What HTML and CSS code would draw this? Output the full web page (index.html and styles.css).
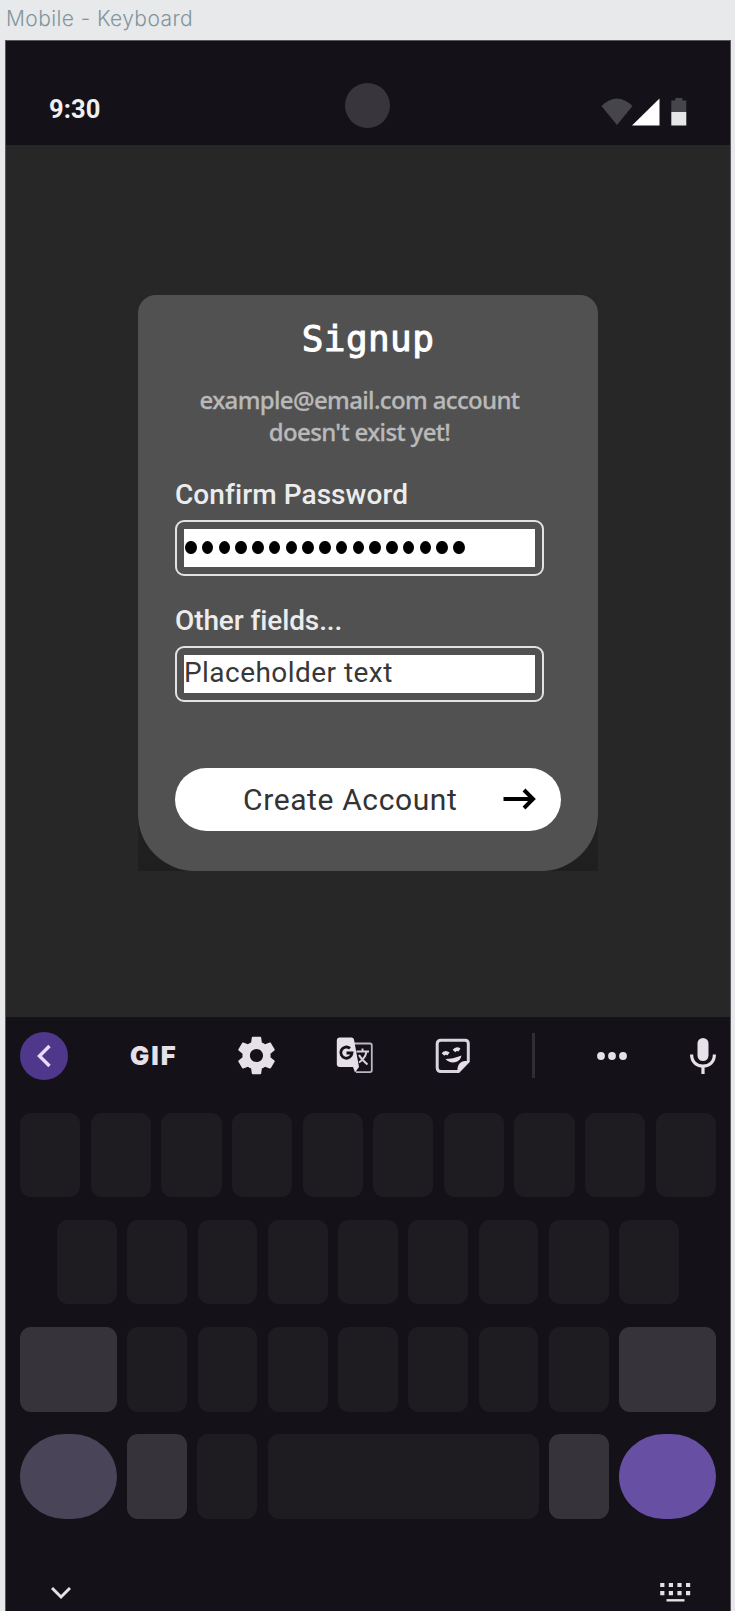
FILE: index.html
```html
<!DOCTYPE html>
<html lang="en">
<head>
<meta charset="utf-8">
<title>Mobile - Keyboard</title>
<link rel="stylesheet" href="styles.css">
</head>
<body>
<div class="frame-label"><span>Mobile - Keyboard</span></div>
<div class="phone">
  <header class="status">
    <span class="time">9:30</span>
    <span class="camera"></span>
    <svg class="status-icons" viewBox="0 0 90 32" width="90" height="32">
      <path fill="#46464a" d="M1.500 9Q17 -6 32.500 9L17 28z"/>
      <path fill="#fff" d="M59.500 1.500V28.500H32z"/>
      <path fill="#46464a" d="M71.300 3.500h4V1h7v2.500h4V15h-15z"/>
      <path fill="#e6e6e6" d="M71.300 15h15v13.500h-15z"/>
    </svg>
  </header>
  <main class="screen">
    <div class="card-shadow">
      <section class="card">
        <h1 class="title"><span>Signup</span></h1>
        <p class="subtitle"><span>example@email.com account</span><br><span>doesn't exist yet!</span></p>
        <div class="label"><span>Confirm Password</span></div>
        <div class="field"><div class="value dots"><i></i><i></i><i></i><i></i><i></i><i></i><i></i><i></i><i></i><i></i><i></i><i></i><i></i><i></i><i></i><i></i><i></i></div></div>
        <div class="label second"><span>Other fields...</span></div>
        <div class="field"><div class="value"><span>Placeholder text</span></div></div>
        <div class="create">
          <span>Create Account</span>
          <svg viewBox="0 0 34 24" width="34" height="24" fill="none" stroke="#000" stroke-width="4"><path d="M.5 12H30M21 3l9 9-9 9"/></svg>
        </div>
      </section>
    </div>
  </main>
  <section class="keyboard">
    <div class="toolbar">
      <div class="back"><svg viewBox="0 0 48 48" width="48" height="48" fill="none" stroke="#e9dcfb" stroke-width="3.400"><path d="M29.500 14L19.500 24l10 10"/></svg></div>
      <div class="gif"><span>GIF</span></div>
      <svg class="gear" viewBox="0 0 24 24" width="45" height="45" fill="#e6e0e9"><path d="M19.430 12.980c.04-.32.07-.64.07-.98s-.03-.66-.07-.98l2.110-1.650c.19-.15.24-.42.12-.64l-2-3.460c-.12-.22-.39-.3-.61-.22l-2.490 1c-.52-.4-1.080-.73-1.690-.98l-.38-2.650C14.460 2.180 14.250 2 14 2h-4c-.25 0-.46.18-.49.42l-.38 2.650c-.61.25-1.170.59-1.690.98l-2.490-1c-.23-.09-.49 0-.61.22l-2 3.460c-.13.22-.07.49.12.64l2.110 1.650c-.04.32-.07.65-.07.98s.03.66.07.98l-2.110 1.650c-.19.15-.24.42-.12.64l2 3.460c.12.22.39.3.61.22l2.490-1c.52.4 1.080.73 1.690.98l.38 2.650c.03.24.24.42.49.42h4c.25 0 .46-.18.49-.42l.38-2.650c.61-.25 1.170-.59 1.690-.98l2.490 1c.23.09.49 0 .61-.22l2-3.460c.12-.22.07-.49-.12-.64l-2.110-1.650zM12 15.500c-1.930 0-3.500-1.570-3.500-3.500s1.570-3.500 3.500-3.500 3.500 1.570 3.500 3.500-1.570 3.500-3.500 3.500z"/></svg>
      <svg class="translate" viewBox="0 0 39 39" width="39" height="39">
        <path d="M19 7.500h16q1.800 0 1.800 1.800v25q0 1.800-1.800 1.800H21" fill="none" stroke="#bcb7c0" stroke-width="1.800"/>
        <path fill="#e6e0e9" d="M5 1.500H16.500Q18.500 1.500 19 3.500L24 31l-4 5.500L18 31H5Q1.800 31 1.800 28V4.700Q1.800 1.500 5 1.500z"/>
        <path d="M15 12.300A5.600 5.600 0 1 0 17 17H11.500" fill="none" stroke="#141118" stroke-width="2.800"/>
        <path d="M21.500 15.500H34M27.500 12.500v3M31.500 16q-1.500 6.500-7.500 10.500M24 19q2.500 4.500 8.500 9.500" fill="none" stroke="#d5d0d9" stroke-width="2"/>
      </svg>
      <svg class="sticker" viewBox="0 0 36 36" width="36" height="36"><path d="M6 2.200H30Q33.300 2.200 33.300 5.500V23.500L23.500 33.500H6Q2.200 33.500 2.200 30V5.500Q2.200 2.200 6 2.200z" fill="none" stroke="#d9d4dd" stroke-width="3"/><path fill="#e6e0e9" d="M34.500 23H29.500q-6 1-7 7v5zM10.500 21q7 0 16-3.500-1 5-5.500 6.500-6.500 1.500-10.500-3z"/><path d="M8 16.500q2.500-3 5.500-.5M19 13q2.500-3 5.500-1" fill="none" stroke="#e6e0e9" stroke-width="3.600"/></svg>
      <div class="divider"></div>
      <svg class="more" viewBox="0 0 32 10" width="32" height="10" fill="#e6e0e9"><circle cx="5" cy="5" r="3.900"/><circle cx="16" cy="5" r="3.900"/><circle cx="27" cy="5" r="3.900"/></svg>
      <svg class="mic" viewBox="0 0 28 38" width="28" height="38"><rect x="8.500" y="1" width="11" height="23" rx="5.500" fill="#e6e0e9"/><path d="M2.600 17.500c0 7.500 5 11.500 11.400 11.500s11.400-4 11.400-11.500M14 29v8" fill="none" stroke="#e6e0e9" stroke-width="3.200"/></svg>
    </div>
    <div class="keys">
      <div class="row"><b></b><b></b><b></b><b></b><b></b><b></b><b></b><b></b><b></b><b></b></div>
      <div class="row inset"><b></b><b></b><b></b><b></b><b></b><b></b><b></b><b></b><b></b></div>
      <div class="row"><b class="wide light"></b><b></b><b></b><b></b><b></b><b></b><b></b><b></b><b class="wide light"></b></div>
      <div class="row"><b class="wide round muted"></b><b class="light"></b><b></b><b class="space"></b><b class="light"></b><b class="wide round primary"></b></div>
    </div>
    <footer class="nav">
      <svg class="collapse" viewBox="0 0 20 14" width="20" height="14" fill="none" stroke="#e6e0e9" stroke-width="3"><path d="M1 2l9 9 9-9"/></svg>
      <svg viewBox="0 0 31 20" width="31" height="20" fill="none" stroke="#e6e0e9" stroke-width="4.200"><path stroke-dasharray="4.200 4.400" d="M.2 3H31M.2 11.200H31"/><path stroke-width="2.400" d="M6.500 18.300h18"/></svg>
    </footer>
  </section>
</div>
</body>
</html>
```
FILE: styles.css
```css
* { box-sizing: border-box; }
body { margin: 0; width: 735px; height: 1611px; overflow: hidden; background: #e7e9eb; font-family: Roboto, sans-serif; display: flex; flex-direction: column; }
span { white-space: nowrap; }
.frame-label { height: 40px; padding-left: 6px; font: 300 21px/38px Inter, sans-serif; color: #82959c; letter-spacing: 0.400px; }
.phone { width: 726px; height: 1571px; margin-left: 5px; border: 1px solid #5b565f; border-bottom: 0; background: #141118; display: flex; flex-direction: column; }
.status { height: 104px; flex: none; display: grid; grid-template-columns: 1fr 45px 1fr; align-items: start; background: #141118; }
.time { margin: 53px 0 0 43px; font-size: 25.500px; line-height: 30px; font-weight: 700; color: #f0f0f0; letter-spacing: 0.100px; }
.camera { width: 45px; height: 45px; margin: 41.500px 0 0 -0.500px; border-radius: 50%; background: #39353c; }
.status-icons { justify-self: end; margin: 56px 40px 0 0; }
.screen { height: 872px; flex: none; background: #272727; padding: 150px 0 0 132px; }
.card-shadow { width: 460px; height: 576px; background: linear-gradient(#262626 60%, #1f1f1f); }
.card { width: 460px; height: 576px; border-radius: 18px 18px 57px 57px; background: #515151; padding: 20px 37px 0; }
.title { margin: 0; height: 48px; font: 400 36px/48px "DejaVu Sans Mono", monospace; color: #fff; text-align: center; letter-spacing: 0.400px; -webkit-text-stroke: 1px #fff; }
.subtitle { margin: 21px 0 0; height: 64px; padding-right: 17px; text-align: center; font: 500 24px/32px "Noto Sans", sans-serif; color: #b9b9b9; letter-spacing: -0.640px; -webkit-text-stroke: 0.300px #b9b9b9; }
.label { margin-top: 27px; height: 40px; font-size: 28px; line-height: 40px; font-weight: 500; color: #ececec; letter-spacing: 0.080px; }
.label.second { margin-top: 25px; height: 45px; letter-spacing: -0.100px; }
.field { width: 369px; height: 56px; margin-top: 5px; border: 2px solid #e2e2e2; border-radius: 9px; padding: 7px; }
.second + .field { margin-top: 0; }
.value { height: 38px; background: #fff; line-height: 35px; font-size: 28px; color: #383838; letter-spacing: 0.450px; }
.dots { display: flex; align-items: center; gap: 5.250px; padding: 0 0 1px 1px; }
.dots i { width: 11.500px; height: 13.500px; border-radius: 50%; background: #000; }
.create { margin-top: 66px; width: 386px; height: 63px; border-radius: 32px; background: #fff; display: flex; align-items: center; padding: 0 24px 1px 68px; justify-content: space-between; font-size: 30px; color: #333; letter-spacing: 0.620px; }
.keyboard { flex: 1; display: flex; flex-direction: column; }
.toolbar { height: 77px; display: flex; align-items: center; padding-left: 14px; }
.toolbar > * { flex: none; }
.back { width: 48px; height: 48px; border-radius: 50%; background: #4f378b; }
.gif { width: 46px; margin-left: 62px; color: #e6e0e9; font: 900 25.500px/38px Inter, sans-serif; letter-spacing: 2px; }
.gear { margin-left: 57.500px; }
.translate { margin-left: 56px; }
.sticker { margin-left: 61px; }
.divider { width: 3px; height: 45px; margin-left: 61.500px; background: #302e34; }
.more { margin-left: 61px; }
.mic { margin-left: 61px; }
.keys { height: 406.400px; margin-top: 18.500px; padding: 0 14px; display: flex; flex-direction: column; justify-content: space-between; }
.row { height: 84.800px; display: flex; gap: 10.400px; }
.row.inset { padding: 0 37px; }
.row b { flex: 1; height: 84.800px; border-radius: 11px; background: #1e1c21; }
.row .wide { flex: 0 0 97px; }
.row .space { flex: 0 0 271px; }
.row .light { background: #36343a; }
.row .round { border-radius: 45px / 42.400px; }
.row .muted { background: #4a4458; }
.row .primary { background: #6750a4; }
.nav { flex: 1; display: flex; justify-content: space-between; align-items: flex-start; padding: 63px 39px 0 45px; }
.collapse { margin-top: 4px; }
```
